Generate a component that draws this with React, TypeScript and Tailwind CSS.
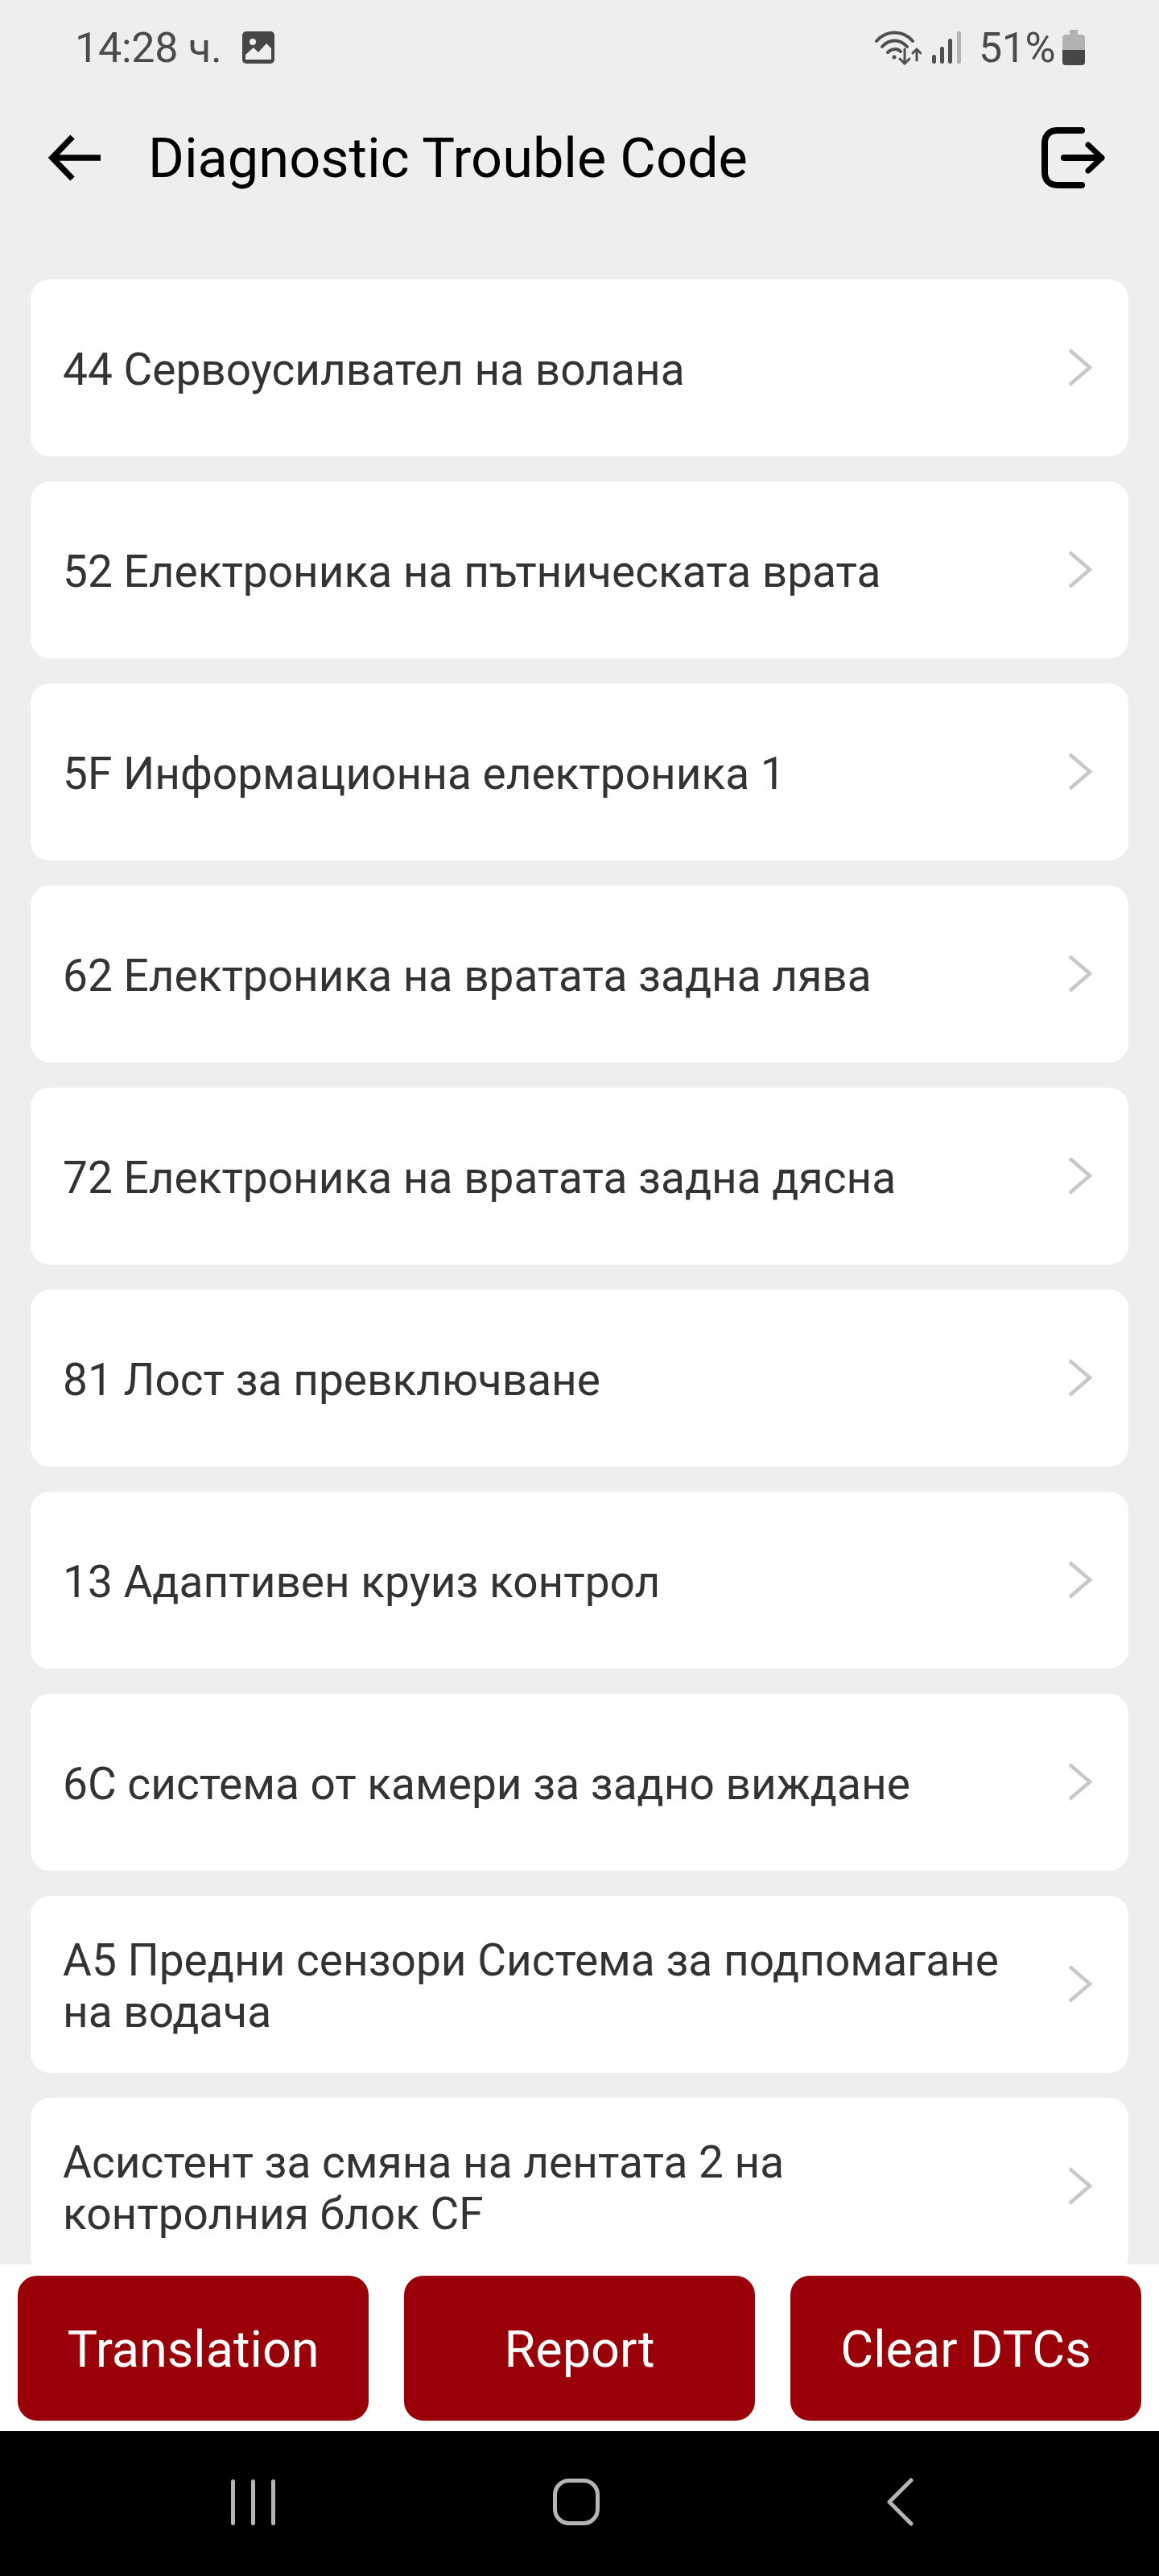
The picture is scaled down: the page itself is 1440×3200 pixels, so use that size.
const items = [
  '44 Сервоусилвател на волана',
  '52 Електроника на пътническата врата',
  '5F Информационна електроника 1',
  '62 Електроника на вратата задна лява',
  '72 Електроника на вратата задна дясна',
  '81 Лост за превключване',
  '13 Адаптивен круиз контрол',
  '6C система от камери за задно виждане',
  'A5 Предни сензори Система за подпомагане на водача',
  'Асистент за смяна на лентата 2 на контролния блок CF',
];

function StatusBar() {
  return (
    <div className="flex h-[118px] shrink-0 items-center justify-between pl-[93px] pr-[92px] text-[#4a4a4a]">
      <div className="flex items-center">
        <span className="pt-[2px] text-[52px] leading-none tracking-[-0.25px]">14:28 ч.</span>
        <svg width="40" height="40" viewBox="0 0 40 40" className="ml-[26px]">
          <rect width="40" height="40" rx="5" fill="#464646" />
          <circle cx="13" cy="13" r="4" fill="#eee" />
          <path d="M4 35v-6l10-9 6 6 10-11 6 6v14z" fill="#eee" />
        </svg>
      </div>
      <div className="flex items-center">
        <svg width="58" height="44" viewBox="0 0 58 44" fill="none" stroke="#4f4f4f" strokeLinecap="round">
          <path d="M2 14C14 0 35 0 47 14" strokeWidth="4" />
          <path d="M9 21C18 11 31 11 40 21" strokeWidth="4" />
          <path d="M16 28C21 23 28 23 32 27" strokeWidth="4" />
          <circle cx="24" cy="34" r="2.5" fill="#4f4f4f" stroke="none" />
          <path d="M37 24V42M31 36l6 6 6-6" strokeWidth="3" />
          <path d="M52 38V24M47 29l5-5 5 5" strokeWidth="3" />
        </svg>
        <svg width="36" height="40" viewBox="0 0 36 40" className="ml-[13px]">
          <rect x="0" y="29" width="5" height="11" rx="2.5" fill="#4f4f4f" />
          <rect x="10" y="19" width="5" height="21" rx="2.5" fill="#4f4f4f" />
          <rect x="20" y="9" width="5" height="31" rx="2.5" fill="#4f4f4f" />
          <rect x="31" y="0" width="5" height="40" rx="1.5" fill="#b4b4b4" />
        </svg>
        <span className="ml-[22px] pt-[2px] text-[52px] leading-none tracking-[-0.5px]">51%</span>
        <svg width="28" height="44" viewBox="0 0 28 44" className="ml-[9px]">
          <path d="M9 0h10v6h5a4 4 0 0 1 4 4v16H0V10a4 4 0 0 1 4-4h5z" fill="#b2b2b2" />
          <path d="M0 25h28v15a4 4 0 0 1-4 4H4a4 4 0 0 1-4-4z" fill="#474747" />
        </svg>
      </div>
    </div>
  );
}

function Header() {
  return (
    <div className="flex h-[156px] shrink-0 items-center justify-between pl-[60px] pr-[66px]">
      <div className="flex items-center">
        <svg width="66" height="58" viewBox="0 0 66 58" fill="none" stroke="#000" strokeWidth="7.5">
          <path d="M30 3L5 29l25 26" />
          <path d="M5 29h60" />
        </svg>
        <h1 className="ml-[58px] pt-[2px] text-[68.5px] font-normal leading-none text-black">Diagnostic Trouble Code</h1>
      </div>
      <svg width="80" height="76" viewBox="0 0 80 76" fill="none" stroke="#000" strokeWidth="8" strokeLinecap="round" strokeLinejoin="round">
        <path d="M50 4H20C10 4 4 10 4 20v36c0 10 6 16 16 16h30" />
        <path d="M28 38h46" />
        <path d="M58 22l17 16-17 16" strokeWidth="7" />
      </svg>
    </div>
  );
}

function Chevron() {
  return (
    <svg width="30" height="47" viewBox="0 0 30 47" fill="none" stroke="#c8c8c8" strokeWidth="4.5" className="mb-[2px] shrink-0">
      <path d="M2 2l25 21.5L2 45" />
    </svg>
  );
}

export default function App() {
  return (
    <div className="flex h-[3200px] w-[1440px] flex-col overflow-hidden bg-[#eeeeee] font-['Roboto',sans-serif]">
      <StatusBar />
      <Header />

      <div className="flex-1 overflow-hidden px-[38px] pt-[73px]">
        <div className="flex flex-col gap-[31px]">
          {items.map(item => (
            <div key={item} className="flex h-[220px] shrink-0 items-center justify-between rounded-[24px] bg-white pl-[40px] pr-[45px]">
              <span className="w-[1190px] pt-[4px] text-[55px] leading-[64px] text-[#333333]">{item}</span>
              <Chevron />
            </div>
          ))}
        </div>
      </div>

      <div className="flex h-[207px] shrink-0 gap-[44px] bg-white px-[22px] pt-[14px]">
        {['Translation', 'Report', 'Clear DTCs'].map(label => (
          <button key={label} className="flex h-[180px] flex-1 items-center justify-center rounded-[24px] bg-[#9a0007] pt-[4px] text-[63px] text-white">
            {label}
          </button>
        ))}
      </div>

      <div className="flex h-[180px] shrink-0 items-center justify-center bg-black pb-[4px] pr-[8px]">
        <div className="flex w-[402px] justify-center gap-[20px]">
          <div className="h-[57px] w-[5px] rounded-full bg-[#b5b5b5]" />
          <div className="h-[57px] w-[5px] rounded-full bg-[#b5b5b5]" />
          <div className="h-[57px] w-[5px] rounded-full bg-[#b5b5b5]" />
        </div>
        <div className="flex w-[402px] justify-center">
          <div className="h-[58px] w-[58px] rounded-[20px] border-[5px] border-[#b5b5b5]" />
        </div>
        <div className="flex w-[402px] justify-center">
          <svg width="34" height="60" viewBox="0 0 34 60" fill="none" stroke="#b5b5b5" strokeWidth="5" strokeLinecap="round" strokeLinejoin="round">
            <path d="M31 3L4 30l27 27" />
          </svg>
        </div>
      </div>
    </div>
  );
}
